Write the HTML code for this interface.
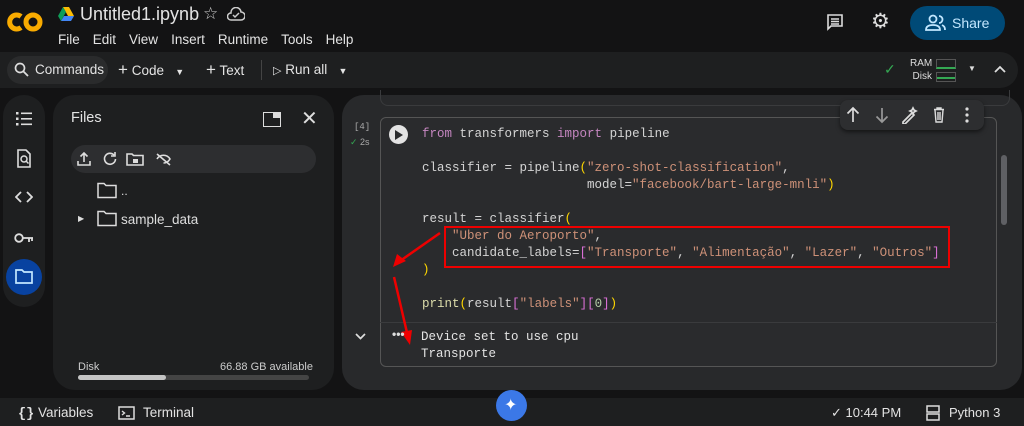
<!DOCTYPE html>
<html><head><meta charset="utf-8"><style>
*{margin:0;padding:0;box-sizing:border-box}
body{width:1024px;height:426px;background:#131314;color:#e3e3e3;font-family:"Liberation Sans",sans-serif;position:relative;overflow:hidden}
.a{position:absolute}
.mono{font-family:"Liberation Mono",monospace;font-size:12.5px;white-space:pre;color:#d4d4d4}
.k{color:#c586c0}.s{color:#ce9178}.y{color:#ffd700}.f{color:#dcdcaa}.p{color:#da70d6}
.menu span{margin-right:13px}
svg{display:block}
</style></head><body>
<!-- logo -->
<svg class="a" style="left:6px;top:10px" width="38" height="24" viewBox="0 0 38 24"><path d="M15 6.5A7 7 0 1 0 15 17.5" fill="none" stroke="#f9ab00" stroke-width="5"/><circle cx="27" cy="12" r="7" fill="none" stroke="#f9ab00" stroke-width="5"/></svg>
<svg class="a" style="left:58px;top:7px" width="16" height="14" viewBox="0 0 16 14"><path d="M5 0h6l5 9h-6z" fill="#fbbc04"/><path d="M5 0L0 9l3 5 5-9z" fill="#0f9d58"/><path d="M3 14h10l3-5H6z" fill="#4285f4"/></svg>
<div class="a" style="left:80px;top:4px;font-size:18px;color:#e3e3e3">Untitled1.ipynb</div>
<div class="a" style="left:203px;top:4px;font-size:17px;color:#ccc">☆</div>
<svg class="a" style="left:227px;top:7px" width="18" height="14" viewBox="0 0 18 14"><path d="M4 13a3.5 3.5 0 0 1 0-7A5 5 0 0 1 14 5a4 4 0 0 1 0 8z M6 8l2 2 4-4" fill="none" stroke="#ccc" stroke-width="1.5"/></svg>
<div class="a menu" style="left:58px;top:32px;font-size:13.5px;color:#e3e3e3"><span>File</span><span>Edit</span><span>View</span><span>Insert</span><span>Runtime</span><span>Tools</span><span>Help</span></div>
<svg class="a" style="left:826px;top:13px" width="18" height="18" viewBox="0 0 18 18"><path d="M2 2h14v11H5l-3 3z" fill="none" stroke="#ddd" stroke-width="1.6"/><path d="M5 6h8M5 8.5h8M5 11h8" stroke="#ddd" stroke-width="1.4"/></svg>
<div class="a" style="left:871px;top:9px;font-size:21px;color:#ddd">⚙</div>
<div class="a" style="left:910px;top:6px;width:95px;height:34px;border-radius:17px;background:#004a77;color:#c2e7ff;font-size:14px;line-height:34px;padding-left:42px">Share</div>
<svg class="a" style="left:925px;top:14px" width="22" height="18" viewBox="0 0 22 18"><circle cx="8" cy="5" r="3.5" fill="none" stroke="#c2e7ff" stroke-width="1.8"/><path d="M1 16c0-4 3-5 7-5s7 1 7 5z" fill="none" stroke="#c2e7ff" stroke-width="1.8"/><path d="M14 2a3.5 3.5 0 0 1 0 7M17 11c2 1 3 2 3 5" fill="none" stroke="#c2e7ff" stroke-width="1.8"/></svg>
<!-- toolbar -->
<div class="a" style="left:0;top:52px;width:1018px;height:36px;background:#1e1f20;border-radius:0 18px 18px 0"></div>
<div class="a" style="left:7px;top:56px;width:101px;height:28px;border-radius:14px;background:#2a2b2c"></div>
<svg class="a" style="left:14px;top:62px" width="15" height="15" viewBox="0 0 15 15"><circle cx="6" cy="6" r="4.5" fill="none" stroke="#ddd" stroke-width="1.7"/><path d="M9.5 9.5L14 14" stroke="#ddd" stroke-width="1.8"/></svg>
<div class="a" style="left:35px;top:62px;font-size:13.5px;color:#e3e3e3">Commands</div>
<div class="a" style="left:118px;top:60px;font-size:13.5px;color:#e3e3e3"><span style="font-size:17px">+</span> Code &nbsp; <span style="font-size:9px">▼</span></div>
<div class="a" style="left:206px;top:60px;font-size:13.5px;color:#e3e3e3"><span style="font-size:17px">+</span> Text</div>
<div class="a" style="left:261px;top:60px;width:1px;height:20px;background:#444"></div>
<div class="a" style="left:273px;top:62px;font-size:13.5px;color:#e3e3e3"><span style="font-size:11px">▷</span> Run all &nbsp; <span style="font-size:9px">▼</span></div>
<div class="a" style="left:884px;top:61px;color:#34a853;font-size:14px">✓</div>
<div class="a" style="left:910px;top:57px;font-size:10px;color:#ddd;line-height:13px;text-align:right;width:22px">RAM<br>Disk</div>
<div class="a" style="left:936px;top:59px;width:20px;height:10px;border:1px solid #555;border-bottom:2px solid #34a853"></div>
<div class="a" style="left:936px;top:72px;width:20px;height:10px;border:1px solid #555;background:linear-gradient(transparent 4px,#34a853 4px,#34a853 6px,transparent 6px)"></div>
<div class="a" style="left:968px;top:64px;font-size:8px;color:#ddd">▼</div>
<svg class="a" style="left:994px;top:65px" width="12" height="8" viewBox="0 0 12 8"><path d="M1 7l5-5 5 5" fill="none" stroke="#ddd" stroke-width="1.8"/></svg>
<!-- left rail -->
<div class="a" style="left:3px;top:95px;width:42px;height:212px;border-radius:21px;background:#1e1f20"></div>
<svg class="a" style="left:15px;top:111px" width="18" height="16" viewBox="0 0 18 16"><g fill="#ddd"><rect x="1" y="1" width="2.5" height="2.5"/><rect x="1" y="6.5" width="2.5" height="2.5"/><rect x="1" y="12" width="2.5" height="2.5"/><rect x="6" y="1.5" width="11" height="1.6"/><rect x="6" y="7" width="11" height="1.6"/><rect x="6" y="12.5" width="11" height="1.6"/></g></svg>
<svg class="a" style="left:16px;top:149px" width="16" height="19" viewBox="0 0 16 19"><path d="M2 1h8l4 4v13H2z" fill="none" stroke="#ddd" stroke-width="1.6"/><circle cx="8" cy="10" r="3" fill="none" stroke="#ddd" stroke-width="1.5"/><path d="M10 12l2.5 2.5" stroke="#ddd" stroke-width="1.5"/></svg>
<svg class="a" style="left:15px;top:190px" width="18" height="14" viewBox="0 0 18 14"><path d="M6 2L1 7l5 5M12 2l5 5-5 5" fill="none" stroke="#ddd" stroke-width="1.8"/></svg>
<svg class="a" style="left:14px;top:232px" width="20" height="12" viewBox="0 0 20 12"><circle cx="5" cy="6" r="3.8" fill="none" stroke="#ddd" stroke-width="1.8"/><path d="M9 6h10M15 6v4M18 6v3" stroke="#ddd" stroke-width="1.8"/></svg>
<div class="a" style="left:6px;top:259px;width:36px;height:36px;border-radius:18px;background:#0842a0"></div>
<svg class="a" style="left:15px;top:269px" width="18" height="15" viewBox="0 0 18 15"><path d="M1 1h6l2 2h8v11H1z" fill="none" stroke="#c2e7ff" stroke-width="1.7"/></svg>
<!-- files panel -->
<div class="a" style="left:53px;top:95px;width:281px;height:295px;border-radius:22px;background:#1e1f20"></div>
<div class="a" style="left:71px;top:110px;font-size:14.5px;color:#e3e3e3">Files</div>
<div class="a" style="left:263px;top:112px;width:18px;height:15px;border:1.6px solid #ddd;background:linear-gradient(90deg,transparent 9px,#ddd 9px) 0 0/100% 5px no-repeat"></div>
<div class="a" style="left:301px;top:106px;font-size:20px;color:#ddd">✕</div>
<div class="a" style="left:71px;top:145px;width:245px;height:28px;border-radius:14px;background:#2d2e30"></div>
<svg class="a" style="left:77px;top:151px" width="100" height="16" viewBox="0 0 100 16"><g fill="none" stroke="#ddd" stroke-width="1.6"><path d="M7 11V2M3.5 5.5L7 2l3.5 3.5M1 10v4h12v-4"/><path d="M37 4a5.5 5.5 0 1 0 1.5 4M38 1v4h-4"/><path d="M50 3h5l1.5 1.5H66v9.5H50z"/><path d="M80 3l13 11M80 8c3-5 10-5 13 0c-1.5 2.5-4 4-6.5 4"/></g><rect x="56" y="8" width="5" height="4" fill="#ddd"/></svg>
<svg class="a" style="left:97px;top:182px" width="20" height="17" viewBox="0 0 20 17"><path d="M1 1.5h6l2 2h10v12H1z" fill="none" stroke="#ddd" stroke-width="1.5"/></svg>
<div class="a" style="left:121px;top:184px;font-size:12px;color:#ddd">..</div>
<div class="a" style="left:78px;top:214px;font-size:8px;color:#ddd">▶</div>
<svg class="a" style="left:97px;top:210px" width="20" height="17" viewBox="0 0 20 17"><path d="M1 1.5h6l2 2h10v12H1z" fill="none" stroke="#ddd" stroke-width="1.5"/></svg>
<div class="a" style="left:121px;top:212px;font-size:13.5px;color:#ddd">sample_data</div>
<div class="a" style="left:78px;top:361px;font-size:11px;color:#ccc">Disk</div>
<div class="a" style="left:220px;top:361px;font-size:11px;color:#ccc">66.88 GB available</div>
<div class="a" style="left:78px;top:375px;width:231px;height:5px;border-radius:3px;background:#444"><div style="width:88px;height:5px;border-radius:3px;background:#c4c4c4"></div></div>
<!-- notebook -->
<div class="a" style="left:342px;top:95px;width:680px;height:295px;border-radius:22px;background:#28292b"></div>
<div class="a" style="left:380px;top:90px;width:630px;height:16px;border:1px solid #3a3b3d;border-radius:0 0 8px 8px;border-top:none"></div>
<div class="a" style="left:380px;top:117px;width:617px;height:250px;border:1px solid #555;border-radius:6px;background:#2a2b2d"></div>
<div class="a" style="left:380px;top:322px;width:617px;height:1px;background:#3a3b3d"></div>
<div class="a" style="left:1001px;top:155px;width:6px;height:70px;border-radius:3px;background:#5f6064"></div>
<div class="a" style="left:840px;top:100px;width:144px;height:30px;border-radius:8px;background:#2d2e30;box-shadow:0 2px 4px #0008"></div>
<svg class="a" style="left:846px;top:106px" width="130" height="18" viewBox="0 0 130 18"><g fill="none" stroke-width="1.7"><path d="M7 16V2M1.5 7.5L7 2l5.5 5.5" stroke="#ddd"/><path d="M36 2v14M30.5 10.5L36 16l5.5-5.5" stroke="#999"/><path d="M57 16l9-9 2 2-9 9h-2z M66 4l1-2 1 2 2 1-2 1-1 2-1-2-2-1z" stroke="#ddd"/><path d="M88 3.5h10M91 3.5V2h4v1.5M89 4l1 12h6l1-12M92 6v8M94 6v8" stroke="#ddd" stroke-width="1.4"/></g><g fill="#ddd"><circle cx="121" cy="3" r="1.6"/><circle cx="121" cy="9" r="1.6"/><circle cx="121" cy="15" r="1.6"/></g></svg>
<div class="a" style="left:354px;top:122px;font-size:9px;color:#aaa;font-family:'Liberation Mono'">[4]</div>
<div class="a" style="left:350px;top:137px;font-size:9px;color:#aaa"><span style="color:#34a853">✓</span> 2s</div>
<div class="a" style="left:389px;top:125px;width:19px;height:19px;border-radius:50%;background:#e3e3e3"></div>
<div class="a" style="left:395px;top:130px;width:0;height:0;border-left:8px solid #2a2b2d;border-top:5px solid transparent;border-bottom:5px solid transparent"></div>
<div class="a mono" style="left:422px;top:126px;line-height:17px"><span class="k">from</span> transformers <span class="k">import</span> pipeline

classifier = pipeline<span class="y">(</span><span class="s">"zero-shot-classification"</span>,
                      model=<span class="s">"facebook/bart-large-mnli"</span><span class="y">)</span>

result = classifier<span class="y">(</span>
    <span class="s">"Uber do Aeroporto"</span>,
    candidate_labels=<span class="p">[</span><span class="s">"Transporte"</span>, <span class="s">"Alimentação"</span>, <span class="s">"Lazer"</span>, <span class="s">"Outros"</span><span class="p">]</span>
<span class="y">)</span>

<span class="f">print</span><span class="y">(</span>result<span class="p">[</span><span class="s">"labels"</span><span class="p">][</span><span style="color:#b5cea8">0</span><span class="p">]</span><span class="y">)</span></div>
<div class="a" style="left:444px;top:226px;width:506px;height:42px;border:2px solid #e00"></div>
<svg class="a" style="left:380px;top:225px" width="70" height="130" viewBox="0 0 70 130"><path d="M60 8L20 36" stroke="#e00" stroke-width="2.5"/><path d="M13 42l4-13 9 7z" fill="#e00"/><path d="M14 52l14 60" stroke="#e00" stroke-width="2.5"/><path d="M30 120l-9-13 11-2z" fill="#e00"/></svg>
<svg class="a" style="left:355px;top:333px" width="11" height="7" viewBox="0 0 11 7"><path d="M1 1l4.5 4.5L10 1" fill="none" stroke="#ddd" stroke-width="1.7"/></svg>
<div class="a" style="left:392px;top:327px;font-size:12px;color:#ddd;font-weight:bold">•••</div>
<div class="a mono" style="left:421px;top:329px;line-height:17px;color:#e3e3e3">Device set to use cpu
Transporte</div>
<!-- bottom bar -->
<div class="a" style="left:0;top:398px;width:1024px;height:28px;background:#1e1f20"></div>
<div class="a" style="left:18px;top:405px;font-size:13.5px;color:#e3e3e3"><b style="font-family:'Liberation Mono'">{}</b> Variables</div>
<svg class="a" style="left:118px;top:406px" width="17" height="14" viewBox="0 0 17 14"><rect x="1" y="1" width="15" height="12" fill="none" stroke="#ddd" stroke-width="1.5"/><path d="M4 5l2.5 2L4 9M8 10h4" fill="none" stroke="#ddd" stroke-width="1.4"/></svg>
<div class="a" style="left:143px;top:405px;font-size:13.5px;color:#e3e3e3">Terminal</div>
<div class="a" style="left:496px;top:390px;width:31px;height:31px;border-radius:50%;background:#3b78e7"></div>
<div class="a" style="left:504px;top:395px;font-size:16px;color:#fff">✦</div>
<div class="a" style="left:831px;top:405px;font-size:13px;color:#e3e3e3">✓ 10:44 PM</div>
<svg class="a" style="left:926px;top:405px" width="14" height="16" viewBox="0 0 14 16"><rect x="1" y="1" width="12" height="6" fill="none" stroke="#ddd" stroke-width="1.5"/><rect x="1" y="9" width="12" height="6" fill="none" stroke="#ddd" stroke-width="1.5"/></svg>
<div class="a" style="left:949px;top:405px;font-size:13px;color:#e3e3e3">Python 3</div>
</body></html>
